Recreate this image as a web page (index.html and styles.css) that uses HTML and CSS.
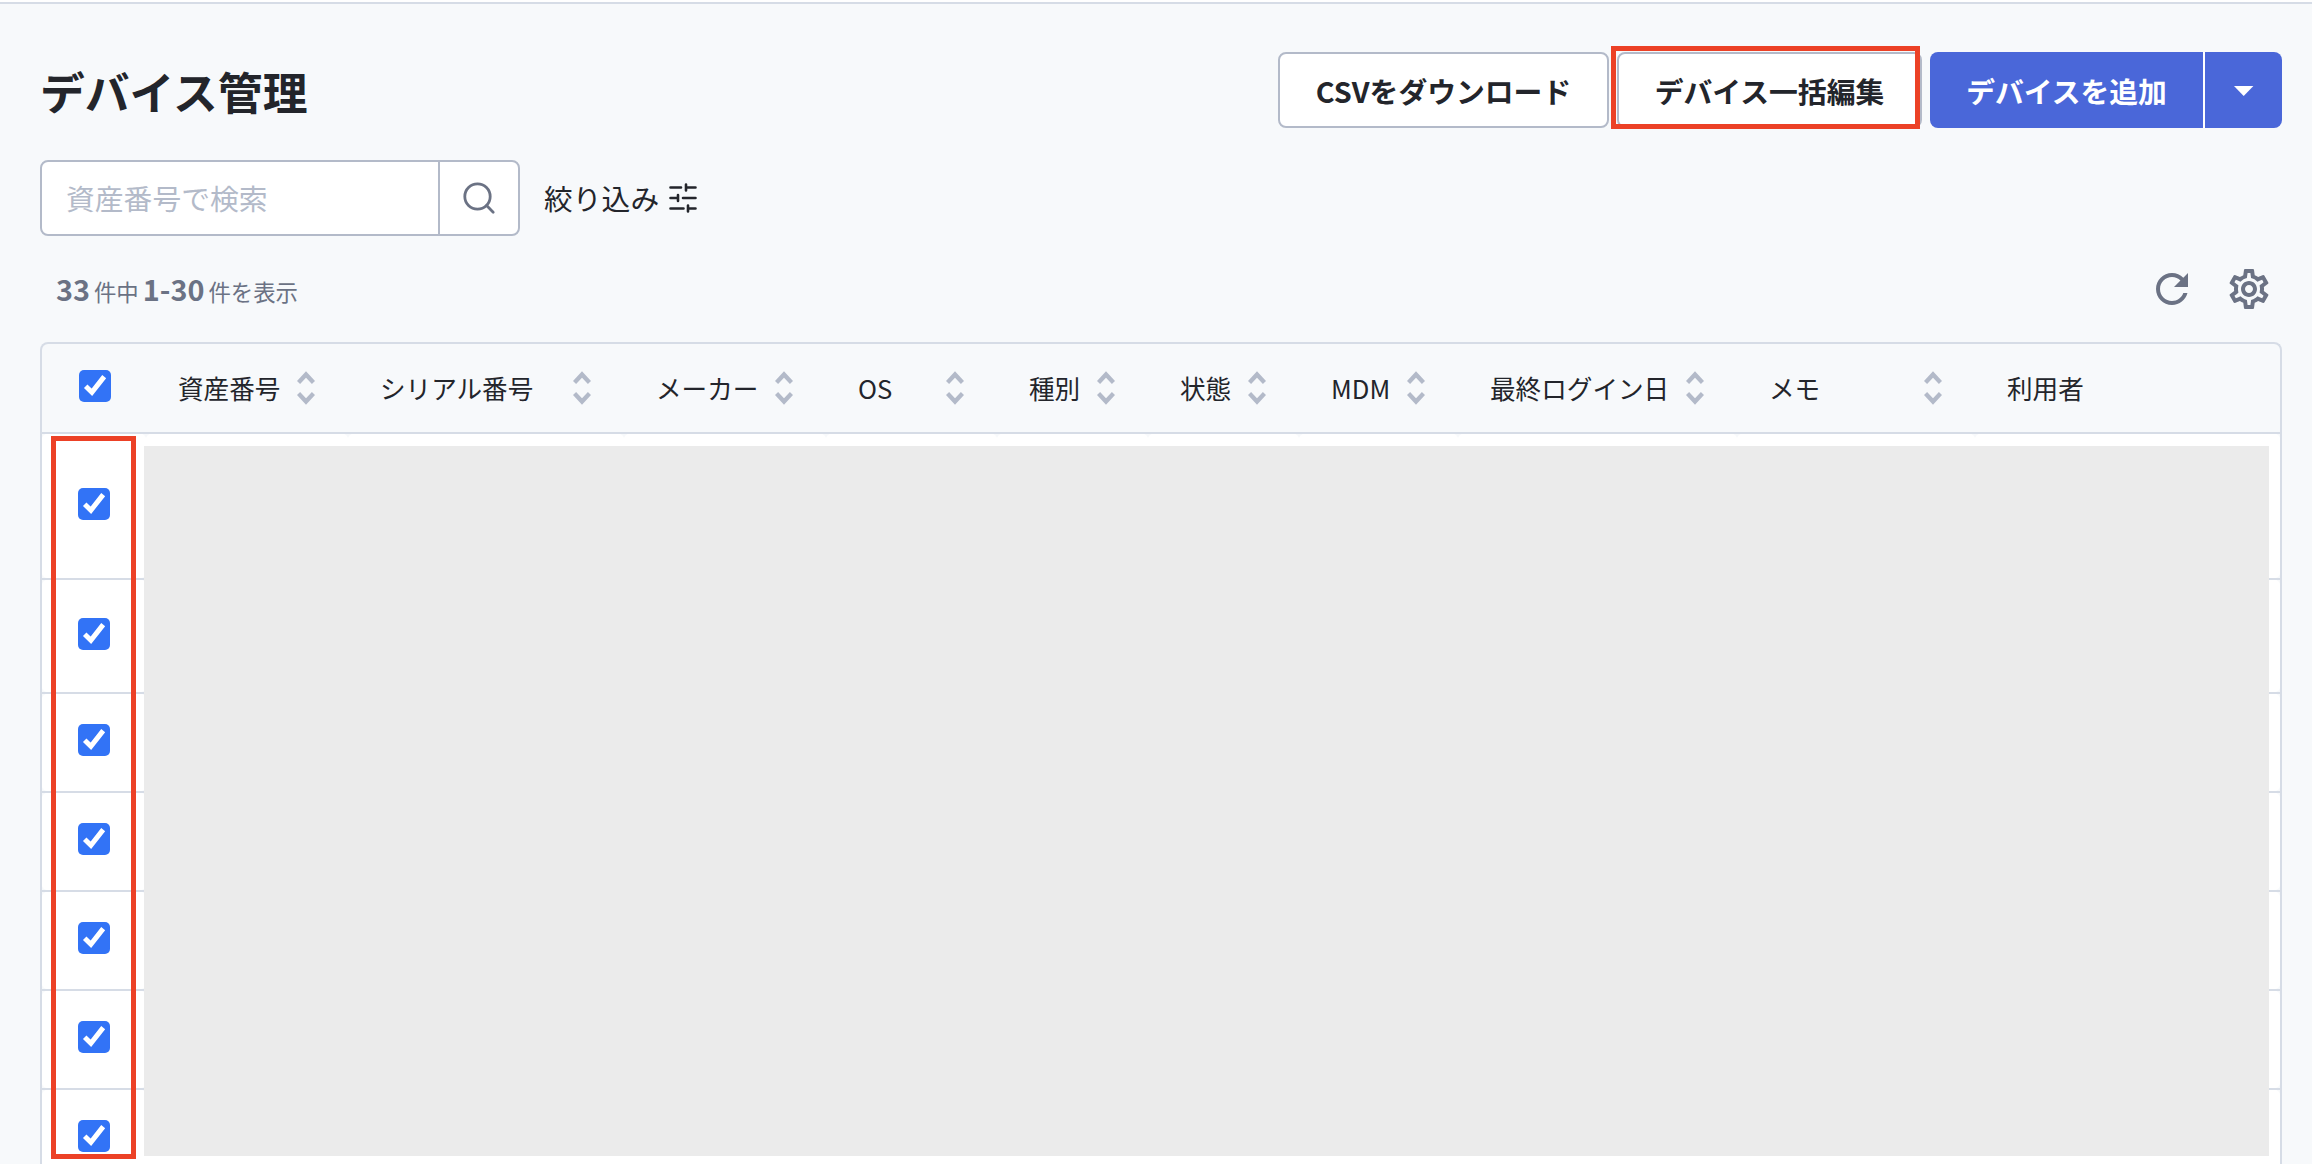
FILE: index.html
```html
<!DOCTYPE html>
<html lang="ja">
<head>
<meta charset="utf-8">
<title>デバイス管理</title>
<link rel="stylesheet" href="styles.css">
</head>
<body>
<svg width="0" height="0" class="defs">
  <symbol id="sort" viewBox="0 0 18 34"><path d="M1.5 11.5 9 3.5 16.5 11.5M1.5 22.5 9 30.5 16.5 22.5" fill="none" stroke="currentColor" stroke-width="4.4"/></symbol>
  <symbol id="check" viewBox="0 0 32 32"><path d="M6.700 16.200 12.900 22.200 25.200 6.600" fill="none" stroke="#fff" stroke-width="5"/></symbol>
</svg>
<main class="page">
  <header class="head">
    <h1 class="title">デバイス管理</h1>
    <div class="actions">
      <button class="btn csv">CSVをダウンロード</button>
      <div class="marked"><button class="btn bulk">デバイス一括編集</button><span class="mark mark-bulk"></span></div>
      <div class="split">
        <button class="btn primary add">デバイスを追加</button>
        <button class="btn primary more"><svg width="20" height="12" viewBox="0 0 20 12"><path d="M0 1h19.4L9.7 11z" fill="#fff"/></svg></button>
      </div>
    </div>
  </header>
  <div class="filters">
    <div class="search">
      <input class="search-input" type="text" placeholder="資産番号で検索">
      <button class="search-btn"><svg width="34" height="34" viewBox="0 0 34 34" fill="none" stroke="#6b7284" stroke-width="2.8" stroke-linecap="round"><circle cx="15.5" cy="15.5" r="12.7"/><path d="m24.6 24.6 6.6 6.6"/></svg></button>
    </div>
    <button class="refine">絞り込み<svg width="28" height="30" viewBox="0 0 28 30" fill="none" stroke="#23252b" stroke-width="2.6" stroke-linecap="round"><path d="M1.5 4.5h10.500M17 1.500v6M17 4.500h9.500M1.500 15h7M9 12v6M14 15h12.500M1.500 25.500h13M19 22.500v6M19 25.500h7.500"/></svg></button>
  </div>
  <div class="summary">
    <p class="count"><b>33</b><span>件中</span><b>1-30</b><span>件を表示</span></p>
    <div class="tools">
      <svg width="48" height="48" viewBox="0 0 24 24"><path d="M17.65 6.35C16.2 4.9 14.21 4 12 4c-4.42 0-7.990 3.580-7.990 8s3.570 8 7.990 8c3.730 0 6.840-2.550 7.730-6h-2.080c-.820 2.330-3.040 4-5.650 4-3.310 0-6-2.690-6-6s2.690-6 6-6c1.660 0 3.140.690 4.220 1.780L13 11h7V4l-2.350 2.350z"/></svg>
      <svg width="48" height="48" viewBox="0 0 24 24"><path d="M19.430 12.980c.04-.320.070-.640.070-.980 0-.340-.030-.660-.070-.980l2.110-1.650c.190-.150.240-.420.120-.640l-2-3.460c-.090-.160-.260-.250-.440-.250-.06 0-.120.010-.170.030l-2.490 1c-.520-.4-1.080-.730-1.690-.980l-.380-2.650C14.460 2.180 14.250 2 14 2h-4c-.250 0-.460.180-.490.420l-.380 2.650c-.610.250-1.170.590-1.690.980l-2.490-1c-.06-.020-.120-.030-.180-.030-.170 0-.340.090-.430.250l-2 3.460c-.130.220-.070.490.120.640l2.110 1.650c-.040.320-.070.650-.070.980s.030.660.070.980l-2.110 1.650c-.190.150-.240.420-.120.640l2 3.460c.090.160.260.250.440.250.060 0 .120-.010.170-.030l2.490-1c.520.4 1.080.730 1.690.980l.380 2.650c.030.240.240.420.490.420h4c.250 0 .460-.180.490-.420l.380-2.650c.610-.250 1.170-.590 1.690-.980l2.490 1c.060.020.120.030.180.030.170 0 .340-.090.430-.250l2-3.460c.120-.220.070-.490-.120-.640l-2.110-1.650zm-1.980-1.710c.040.310.050.520.050.730 0 .210-.020.430-.050.730l-.140 1.130.890.700 1.080.840-.7 1.210-1.270-.510-1.040-.420-.9.680c-.430.320-.840.560-1.250.730l-1.060.430-.160 1.130-.2 1.350h-1.400l-.190-1.350-.160-1.130-1.060-.430c-.430-.180-.830-.410-1.230-.710l-.910-.7-1.060.430-1.270.510-.7-1.210 1.080-.840.890-.7-.140-1.130c-.030-.310-.050-.540-.050-.740s.020-.430.050-.730l.140-1.130-.890-.7-1.080-.840.700-1.210 1.270.510 1.040.420.9-.68c.430-.32.840-.56 1.250-.73l1.060-.43.160-1.130.2-1.350h1.390l.190 1.350.160 1.130 1.060.43c.43.18.83.41 1.230.71l.91.7 1.060-.43 1.270-.51.7 1.210-1.070.85-.89.700.14 1.130zM12 8c-2.210 0-4 1.790-4 4s1.790 4 4 4 4-1.790 4-4-1.790-4-4-4zm0 6c-1.100 0-2-.9-2-2s.9-2 2-2 2 .9 2 2-.9 2-2 2z"/></svg>
    </div>
  </div>
  <section class="table">
    <div class="row thead">
      <div class="pick"><svg class="box"><use href="#check"/></svg></div>
      <div class="th">資産番号<svg class="sort"><use href="#sort"/></svg></div>
      <div class="th">シリアル番号<svg class="sort"><use href="#sort"/></svg></div>
      <div class="th">メーカー<svg class="sort"><use href="#sort"/></svg></div>
      <div class="th">OS<svg class="sort"><use href="#sort"/></svg></div>
      <div class="th">種別<svg class="sort"><use href="#sort"/></svg></div>
      <div class="th">状態<svg class="sort"><use href="#sort"/></svg></div>
      <div class="th">MDM<svg class="sort"><use href="#sort"/></svg></div>
      <div class="th">最終ログイン日<svg class="sort"><use href="#sort"/></svg></div>
      <div class="th">メモ<svg class="sort"><use href="#sort"/></svg></div>
      <div class="th">利用者</div>
    </div>
    <div class="tbody">
      <div class="row tr tall"><div class="td pick"><svg class="box"><use href="#check"/></svg></div><div class="td"></div><div class="td"></div><div class="td"></div><div class="td"></div><div class="td"></div><div class="td"></div><div class="td"></div><div class="td"></div><div class="td"></div><div class="td"></div></div>
      <div class="row tr mid"><div class="td pick"><svg class="box"><use href="#check"/></svg></div><div class="td rest"></div></div>
      <div class="row tr"><div class="td pick"><svg class="box"><use href="#check"/></svg></div><div class="td rest"></div></div>
      <div class="row tr"><div class="td pick"><svg class="box"><use href="#check"/></svg></div><div class="td rest"></div></div>
      <div class="row tr"><div class="td pick"><svg class="box"><use href="#check"/></svg></div><div class="td rest"></div></div>
      <div class="row tr"><div class="td pick"><svg class="box"><use href="#check"/></svg></div><div class="td rest"></div></div>
      <div class="row tr"><div class="td pick"><svg class="box"><use href="#check"/></svg></div><div class="td rest"></div></div>
      <div class="mask"></div>
      <span class="mark mark-pick"></span>
    </div>
  </section>
</main>
</body>
</html>
```
FILE: styles.css
```css
* { box-sizing: border-box; }
body {
  margin: 0;
  background: #f7f9fb;
  color: #23252b;
  font-family: "Noto Sans CJK JP", sans-serif;
  font-size: 28.8px;
  line-height: 1.5;
}
button, input { font: inherit; color: inherit; margin: 0; padding: 0; border: 0; background: none; }
svg { display: block; flex: none; }
.defs { position: absolute; }
.page {
  height: 1164px;
  overflow: hidden;
  border-top: 2px solid #fff;
  padding: 0 30px 0 40px;
}
.page::before { content: ""; display: block; height: 2px; margin: 0 -30px 0 -40px; background: #d6dce6; }
.head { display: flex; justify-content: space-between; height: 124px; padding-top: 48px; }
.title { margin: 0; font-size: 44.8px; line-height: 78px; font-weight: 700; }
.actions { display: flex; gap: 8px; }
.btn {
  display: flex; align-items: center; justify-content: center;
  height: 76px; border: 2px solid #b3bac9; border-radius: 8px; padding-top: 2px;
  background: #fff; font-weight: 700; white-space: nowrap;
}
.csv { width: 331px; }
.bulk { width: 305px; }
.split { display: flex; gap: 2px; height: 76px; background: linear-gradient(#fff, #fff) 273px 0 / 2px 76px no-repeat; }
.btn.primary { border: 0; background: #4a67d9; color: #fff; }
.btn.add { width: 273px; border-radius: 8px 0 0 8px; }
.btn.more { width: 77px; border-radius: 0 8px 8px 0; }
.marked { position: relative; }
.mark { position: absolute; border: 5px solid #ec4126; }
.mark-bulk { left: -6px; top: -6px; width: 309px; height: 83px; }

.filters { display: flex; gap: 24px; height: 108px; padding-top: 32px; }
.search { display: flex; width: 480px; height: 76px; border: 2px solid #b3bac9; border-radius: 8px; background: #fff; }
.search-input { flex: 1; min-width: 0; padding-left: 24px; outline: 0; }
.search-input::placeholder { color: #b3bac9; opacity: 1; }
.search-btn { display: flex; align-items: center; justify-content: center; width: 80px; border-left: 2px solid #b3bac9; }
.refine { display: flex; align-items: center; gap: 10px; height: 76px; }

.summary { display: flex; justify-content: space-between; height: 106px; padding: 29px 9px 0 16px; }
.count { display: flex; align-items: baseline; gap: 4px; margin: 0; height: 48px; color: #6b7284; line-height: 47px; }
.count span { font-size: 22.4px; }
.tools { display: flex; gap: 29px; fill: #6b7284; }

.table { width: 2242px; border: 2px solid #d6dce6; border-bottom: 0; border-radius: 8px 8px 0 0; }
.row { display: grid; grid-template-columns: 104px 202px 276px 202px 171px 151px 151px 159px 279px 238px 305px; }
.thead { height: 90px; border-bottom: 2px solid #d6dce6; font-size: 25.6px; }
.th { display: flex; align-items: center; justify-content: space-between; padding: 0 33px 0 32px; white-space: nowrap; }
.sort { width: 18px; height: 34px; color: #b3bac9; }
.pick { display: flex; align-items: center; padding: 0 0 5px 36px; }
.thead .pick { padding: 0 0 4px 37px; }
.box { width: 32px; height: 32px; border-radius: 5px; background: #3273f6; }
.tbody { position: relative; }
.tr { height: 99px; border-bottom: 2px solid #d6dce6; }
.tr.tall { height: 146px; }
.tr.mid { height: 114px; }
.td { background: #fff; border-radius: 5px; }
.tall .pick, .mid .pick { padding-bottom: 4px; }
.rest { grid-column: 2 / -1; }
.mask { position: absolute; left: 102px; top: 12px; width: 2125px; height: 710px; background: #ebebeb; }
.mark-pick { left: 9px; top: 2px; width: 85px; height: 723px; }
```
